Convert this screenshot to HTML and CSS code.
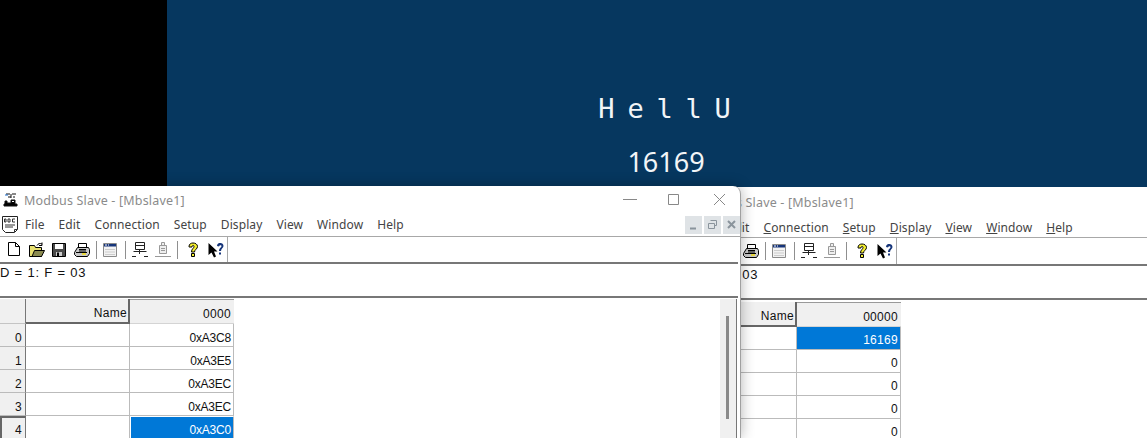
FILE: index.html
```html
<!DOCTYPE html>
<html lang="en">
<head>
    <meta charset="UTF-8">
    <title>Modbus Slave</title>
    <link rel="stylesheet" href="styles.css">
</head>
<body>
    <svg class="defs" width="0" height="0">
        <symbol id="i-new" viewBox="0 0 16 16"><path d="M2.500 0.500H9.500L13.500 4.500V13.500H2.500ZM9.500 0.500V4.500H13.500" fill="#fff" stroke="#000"/></symbol>
        <symbol id="i-open" viewBox="0 0 16 16"><path d="M0.500 3.500H5.500L6.500 5.500H12.500V14.500H0.500Z" fill="#e8e070" stroke="#000"/><path d="M3 14.500L5.500 8.500H15.500L12.500 14.500Z" fill="#8a8a50" stroke="#000"/><path d="M8 3.500C9 1.500 11 1 13 2M13 0.500V3.500H10" fill="none" stroke="#000"/></symbol>
        <symbol id="i-save" viewBox="0 0 16 16"><path d="M1.500 1.500H14.500V14.500H1.500Z" fill="#4a4a4a" stroke="#000"/><path d="M4 2H12V7H4Z" fill="#fff"/><path d="M5 10H11V14H5Z" fill="#ccc"/><path d="M6 10.500H8V14H6Z" fill="#000"/></symbol>
        <symbol id="i-print" viewBox="0 0 16 16"><path d="M4.500 1.500H12.500V6.500H4.500Z" fill="#fff" stroke="#000"/><path d="M0.500 10.500L3.500 5.500H14.500L15.500 7.500V11.500L13.500 14.500H2.500L0.500 12.500Z" fill="#c8c8c8" stroke="#000"/><path d="M2 10.500H13M5 7.500H12M5 9H12" stroke="#000"/><path d="M8 12H12" stroke="#e8d840" stroke-width="2"/></symbol>
        <symbol id="i-win" viewBox="0 0 14 14"><path d="M0.500 0.500H13.500V13.500H0.500Z" fill="#f2f2f2" stroke="#8a8a8a"/><path d="M1 1H13V3.500H1Z" fill="#16357a"/><path d="M2 2H4M5 2H6" stroke="#fff"/><path d="M2 6.500H12M2 9H12M2 11.500H12" stroke="#ccc"/></symbol>
        <symbol id="i-link" viewBox="0 0 16 16"><path d="M3.500 0.500H12.500V7.500H3.500ZM3.500 3.500H12.500M1.500 9.500H14.500" fill="#fff" stroke="#222"/><path d="M7.500 8V12M0 14.500H4M12 14.500H16" stroke="#222"/></symbol>
        <symbol id="i-link-off" viewBox="0 0 16 16"><path d="M6.500 0.500H9.500V3.500H6.500ZM4.500 3.500H11.500V11.500H4.500ZM0 14.500H16M6 6.500H10M6 8.500H10" fill="#eee" stroke="#999"/></symbol>
        <symbol id="i-help" viewBox="0 0 12 16"><path d="M2 4.500C2 2 4 1 6 1S10.500 2 10.500 4.500C10.500 7 7.500 7.500 7.500 10H4.500C4.500 6.500 7 6.500 7 4.500C7 3 5 3 5 5H2Z" fill="#f4ee30" stroke="#000"/><path d="M4.500 11.500H7.500V14.500H4.500Z" fill="#f4ee30" stroke="#000"/></symbol>
        <symbol id="i-what" viewBox="0 0 16 16"><path d="M0.500 1V13L3.500 10.500L6 15.500L8 14.500L6 9.500H9.500Z" fill="#000"/><path d="M9 4C9 1.500 11 1 12.500 1S15.500 2 15.500 4C15.500 6 13 6.500 13 9H11C11 6 13.500 5.500 13.500 4C13.500 3 11.500 3 11 4.500Z" fill="#16357a"/><path d="M11 10.500H13V12.500H11Z" fill="#16357a"/></symbol>
    </svg>

    <div class="desktop">
        <div class="backdrop">
            <div class="side"></div>
            <div class="screen">
                <div class="screen-title">HellU</div>
                <div class="screen-value">16169</div>
            </div>
        </div>

        <!-- window behind -->
        <section class="win win-back">
            <div class="titlebar"><span class="title">Modbus Slave - [Mbslave1]</span></div>
            <div class="menubar">
                <span class="menu-item"><u>F</u>ile</span>
                <span class="menu-item"><u>E</u>dit</span>
                <span class="menu-item"><u>C</u>onnection</span>
                <span class="menu-item"><u>S</u>etup</span>
                <span class="menu-item"><u>D</u>isplay</span>
                <span class="menu-item"><u>V</u>iew</span>
                <span class="menu-item"><u>W</u>indow</span>
                <span class="menu-item"><u>H</u>elp</span>
            </div>
            <div class="toolbar">
                <svg class="tool tool-new"><use href="#i-new"/></svg>
                <svg class="tool tool-open"><use href="#i-open"/></svg>
                <svg class="tool tool-save"><use href="#i-save"/></svg>
                <svg class="tool tool-print"><use href="#i-print"/></svg>
                <span class="sep"></span>
                <svg class="tool tool-win"><use href="#i-win"/></svg>
                <span class="sep"></span>
                <svg class="tool tool-link"><use href="#i-link"/></svg>
                <svg class="tool tool-off"><use href="#i-link-off"/></svg>
                <span class="sep"></span>
                <svg class="tool tool-help"><use href="#i-help"/></svg>
                <svg class="tool tool-what"><use href="#i-what"/></svg>
            </div>
            <div class="message">D = 1: F = 03</div>
            <div class="sheet-wrap">
                <div class="sheet">
                    <div class="corner"></div><div class="head">Name</div><div class="head head-val">00000</div>
                    <div class="rowhead">0</div><div class="cell"></div><div class="cell val selected">16169</div>
                    <div class="rowhead">1</div><div class="cell"></div><div class="cell val">0</div>
                    <div class="rowhead">2</div><div class="cell"></div><div class="cell val">0</div>
                    <div class="rowhead">3</div><div class="cell"></div><div class="cell val">0</div>
                    <div class="rowhead">4</div><div class="cell"></div><div class="cell val">0</div>
                </div>
            </div>
        </section>

        <!-- window in front -->
        <section class="win win-front">
            <div class="titlebar">
                <svg class="app-icon" viewBox="0 0 15 15"><path d="M3 2H7M9 2H13M5 5H8M8 2V6M11 4V6M1 14H14V12H12V8H8V11H4V9H2V12H1Z" fill="#000" stroke="#111"/><path d="M2 3H5" stroke="#1c6fd0"/><path d="M9 9H11V10H9Z" fill="#fff"/></svg>
                <span class="title">Modbus Slave - [Mbslave1]</span>
                <div class="win-controls">
                    <svg class="ctl" viewBox="0 0 46 20"><path d="M18 10.500H32" stroke="#888"/></svg>
                    <svg class="ctl" viewBox="0 0 46 20"><path d="M17.500 5.500H27.500V15.500H17.500Z" fill="none" stroke="#888"/></svg>
                    <svg class="ctl" viewBox="0 0 46 20"><path d="M17 5L28 16M28 5L17 16" stroke="#888"/></svg>
                </div>
            </div>
            <div class="menubar">
                <svg class="doc-icon" viewBox="0 0 16 17"><path d="M0.500 0.500H15.500V13.500L12.500 16.500H3.500L0.500 13.500Z" fill="#fff" stroke="#222"/><path d="M2 2H14V7H2Z" fill="#fff"/><path d="M2.500 3V6M2.500 3H4V6H2.500M6 3H8V6H6ZM13 3H10.500V6H13M3 9H13M3 11H11M12.500 16V13.500H15" fill="none" stroke="#333"/></svg>
                <span class="menu-item">File</span>
                <span class="menu-item">Edit</span>
                <span class="menu-item">Connection</span>
                <span class="menu-item">Setup</span>
                <span class="menu-item">Display</span>
                <span class="menu-item">View</span>
                <span class="menu-item">Window</span>
                <span class="menu-item">Help</span>
                <div class="mdi-controls">
                    <span class="mdi"><svg viewBox="0 0 17 18"><path d="M5 12.500H11" stroke="#8a949c" stroke-width="2"/></svg></span>
                    <span class="mdi"><svg viewBox="0 0 17 18"><path d="M6.500 4.500H12.500V9.500H10.500M4.500 7.500H10.500V12.500H4.500Z" fill="none" stroke="#8a949c"/></svg></span>
                    <span class="mdi"><svg viewBox="0 0 17 18"><path d="M5 5L12 12M12 5L5 12" stroke="#8a949c" stroke-width="2"/></svg></span>
                </div>
            </div>
            <div class="toolbar">
                <svg class="tool tool-new"><use href="#i-new"/></svg>
                <svg class="tool tool-open"><use href="#i-open"/></svg>
                <svg class="tool tool-save"><use href="#i-save"/></svg>
                <svg class="tool tool-print"><use href="#i-print"/></svg>
                <span class="sep"></span>
                <svg class="tool tool-win"><use href="#i-win"/></svg>
                <span class="sep"></span>
                <svg class="tool tool-link"><use href="#i-link"/></svg>
                <svg class="tool tool-off"><use href="#i-link-off"/></svg>
                <span class="sep"></span>
                <svg class="tool tool-help"><use href="#i-help"/></svg>
                <svg class="tool tool-what"><use href="#i-what"/></svg>
            </div>
            <div class="message">D = 1: F = 03</div>
            <div class="sheet-wrap">
                <div class="sheet">
                    <div class="corner"></div><div class="head">Name</div><div class="head head-val">0000</div>
                    <div class="rowhead">0</div><div class="cell"></div><div class="cell val hex">0xA3C8</div>
                    <div class="rowhead">1</div><div class="cell"></div><div class="cell val hex">0xA3E5</div>
                    <div class="rowhead">2</div><div class="cell"></div><div class="cell val hex">0xA3EC</div>
                    <div class="rowhead">3</div><div class="cell"></div><div class="cell val hex">0xA3EC</div>
                    <div class="rowhead rowhead-active">4</div><div class="cell"></div><div class="cell val hex selected selected-boxed">0xA3C0</div>
                </div>
                <div class="scrollbar"><div class="thumb"></div></div>
            </div>
        </section>
    </div>
</body>
</html>
```

FILE: styles.css
```css
html, body {
    margin: 0;
    height: 100%;
    overflow: hidden;
}
body {
    font-family: "Liberation Sans", Arial, sans-serif;
    font-size: 12px;
    color: #111;
    background-color: #000;
}
.defs {
    display: block;
    height: 0;
}
.desktop {
    position: relative;
    width: 1147px;
    height: 438px;
    overflow: hidden;
}
.backdrop {
    display: flex;
    height: 190px;
}
.side {
    width: 167px;
    background-color: #000;
}
.screen {
    flex: 1;
    background-color: #06375f;
    color: #f2f5f7;
    text-align: center;
    padding-left: 18px;
}
.screen-title {
    font-family: "DejaVu Sans Mono", monospace;
    font-size: 27px;
    font-weight: 300;
    letter-spacing: 12.8px;
    line-height: 32px;
    padding-top: 93px;
    padding-left: 10px;
}
.screen-value {
    font-family: "Noto Sans", sans-serif;
    font-size: 27px;
    line-height: 36px;
    margin-top: 19px;
}

/* windows */
.win {
    position: absolute;
    background-color: #fff;
    overflow: hidden;
    display: flex;
    flex-direction: column;
}
.win-front {
    left: 0;
    top: 186px;
    width: 740px;
    height: 252px;
    border-right: 1px solid #a0a0a0;
    border-top-right-radius: 8px;
    box-shadow: 0 0 14px rgba(0, 0, 0, 0.3);
}
.win-back {
    left: 669px;
    top: 187px;
    width: 600px;
    height: 251px;
}
.titlebar {
    display: flex;
    align-items: center;
    height: 26px;
    padding-left: 3px;
    flex: none;
}
.win-back .titlebar {
    height: 29px;
}
.app-icon {
    width: 15px;
    height: 15px;
    margin-right: 6px;
}
.title {
    font-family: "Noto Sans", sans-serif;
    font-size: 12.5px;
    letter-spacing: 0.18px;
    color: #8b8b8b;
    padding-top: 2px;
}
.win-back .title {
    margin-left: 21px;
}
.win-controls {
    display: flex;
    margin-left: auto;
    margin-right: -3px;
}
.ctl {
    width: 46px;
    height: 20px;
}
.menubar {
    display: flex;
    align-items: center;
    flex: none;
    height: 23px;
    padding-left: 2px;
    padding-top: 1px;
    font-family: "Noto Sans", sans-serif;
    font-size: 12px;
    letter-spacing: 0.1px;
    color: #444;
    border-bottom: 1px solid #a8a8a8;
}
.win-back .menubar {
    height: 19px;
    padding-left: 25px;
    padding-top: 2px;
}
.doc-icon {
    width: 16px;
    height: 17px;
    margin-right: 7px;
}
.menu-item {
    margin-right: 14px;
}
.mdi-controls {
    display: flex;
    gap: 2px;
    margin-left: auto;
}
.mdi {
    display: block;
    width: 17px;
    height: 18px;
    background-color: #dfe3e6;
}
.mdi svg {
    display: block;
    width: 17px;
    height: 18px;
}
.toolbar {
    display: flex;
    align-items: center;
    flex: none;
    box-sizing: border-box;
    width: 228px;
    height: 25px;
    padding-left: 6px;
    border-right: 1px solid #a8a8a8;
}
.win-back .toolbar {
    height: 26px;
}
.tool {
    width: 16px;
    height: 16px;
    flex: none;
    margin-right: 7px;
}
.tool-open {
    margin-right: 6px;
}
.tool-print {
    margin-right: 6px;
}
.tool-win {
    width: 14px;
    height: 14px;
    margin-right: 8px;
}
.tool-off {
    margin-right: 6px;
}
.tool-help {
    width: 12px;
    margin-left: 3px;
    margin-right: 9px;
}
.tool-what {
    margin-right: 0;
}
.sep {
    width: 1px;
    height: 18px;
    flex: none;
    background-color: #8f8f8f;
    margin-right: 6px;
}
.message {
    flex: none;
    box-sizing: border-box;
    height: 36px;
    padding-top: 1px;
    font-size: 13px;
    border-top: 2px solid #777;
    border-bottom: 2px solid #777;
    letter-spacing: 0.8px;
    white-space: nowrap;
}
.win-back .message {
    padding-left: 3px;
}
.win-front .message {
    margin-right: 2px;
}
.sheet-wrap {
    display: flex;
    flex: 1;
    min-height: 0;
    padding-top: 1px;
}
.sheet {
    flex: 1;
    display: grid;
    grid-template-columns: 26px 104px 104px;
    grid-template-rows: 25px;
    grid-auto-rows: 23px;
    align-content: start;
    font-size: 12px;
    letter-spacing: 0.3px;
}
.win-back .sheet {
    grid-template-columns: 24px 104px 104px;
    padding-top: 1px;
}
.corner, .head, .rowhead {
    background-color: #f0f0f0;
    box-sizing: border-box;
}
.corner {
    border-right: 1px solid #777;
    border-bottom: 1px solid #c4c4c4;
}
.head {
    line-height: 29px;
    text-align: right;
    padding-right: 1px;
    border-right: 2px solid #666;
    border-bottom: 2px solid #666;
}
.head-val {
    border-top: 1px solid #999;
    border-right: 0;
    border-bottom: 1px solid #d4d4d4;
    padding-right: 3px;
}
.rowhead {
    text-align: right;
    line-height: 12px;
    padding-top: 8px;
    padding-right: 3px;
    border-right: 1px solid #777;
    border-bottom: 1px solid #bbb;
}
.rowhead-active {
    border-top: 2px solid #666;
    border-left: 2px solid #666;
    padding-top: 6px;
}
.cell {
    box-sizing: border-box;
    border-right: 1px solid #bbb;
    border-bottom: 1px solid #bbb;
}
.val {
    text-align: right;
    line-height: 12px;
    padding-top: 8px;
    padding-right: 2px;
}
.win-back .val, .win-back .rowhead {
    padding-top: 7px;
}
.hex {
    letter-spacing: -0.2px;
}
.selected {
    background-color: #0078d7;
    color: #fff;
}
.selected-boxed {
    padding-top: 7px;
    border: 1px solid #fff;
    border-bottom: 0;
    border-right: 1px solid #bbb;
}
.scrollbar {
    flex: none;
    width: 16px;
    margin-right: 3px;
    background-color: #f0f0f0;
    border-right: 1px solid #777;
}
.thumb {
    width: 3px;
    height: 103px;
    margin: 17px 0 0 6px;
    background-color: #8a8a8a;
}
```
